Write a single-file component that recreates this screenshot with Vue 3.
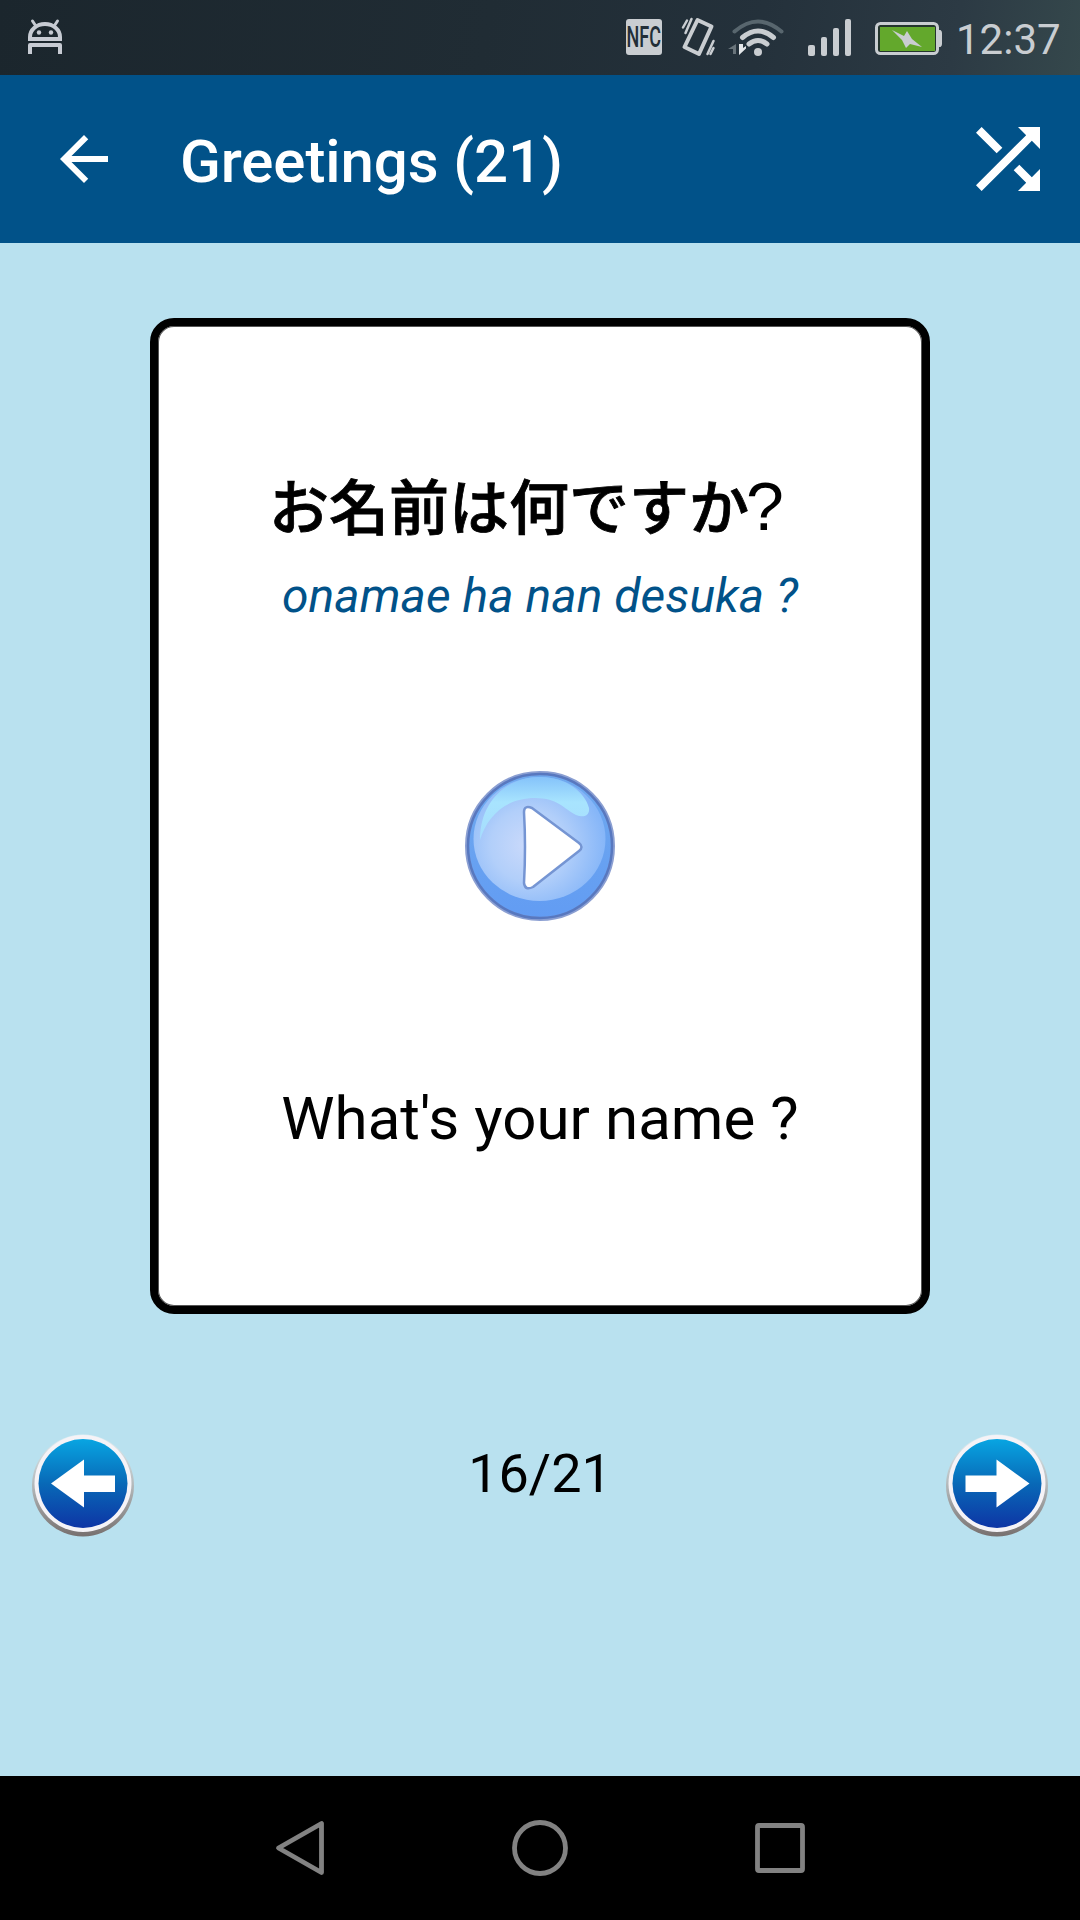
<template>
  <main class="phone">
    <div class="status-bar">
      <svg class="android" viewBox="28 18 34 36" fill="none" stroke="#c7cbd3" stroke-width="4">
        <path d="M30 39v-2a15 13 0 0 1 30 0v2z" />
        <path d="M32.500 21l3 4.500M57.500 21l-3 4.500" stroke-width="3" stroke-linecap="round" />
        <path d="M30 54v-9h30v9" stroke-linejoin="round" />
        <circle cx="39" cy="32.500" r="2.200" fill="#c7cbd3" stroke="none" />
        <circle cx="51" cy="32.500" r="2.200" fill="#c7cbd3" stroke="none" />
      </svg>
      <div class="status-icons">
        <div class="nfc"><span>NFC</span></div>
        <svg class="vibrate" viewBox="681 17 35 40" fill="none" stroke="#c9cdd1" stroke-linecap="round">
          <path d="M697.500 20l14 6.500-12.500 27.500-14.500-7z" stroke-width="4" stroke-linejoin="round" />
          <path d="M691.500 19l-6 14M687 20.500l-4 7M713.500 41l-6 13M713.500 48l-3 6" stroke-width="2.500" />
        </svg>
        <svg class="wifi" viewBox="728 18 56 39" fill="none" stroke="#c9cdd1" stroke-linecap="round">
          <path d="M734.500 31.500q23.500-20 47 0" stroke="#58666e" stroke-width="4" />
          <path d="M742.500 37.500q15.500-13 31 0M749 44q9-7 18 0" stroke-width="5" />
          <circle cx="758" cy="52" r="4" fill="#c9cdd1" stroke="none" />
          <path d="M739 44v11l7-6.500v-2.500l-3 2v-4z" fill="#e4e7ea" stroke="none" />
          <path d="M736 44v10h-3v-5h-5z" fill="#69747b" stroke="none" />
        </svg>
        <svg class="signal" viewBox="808 19 44 37" fill="#c9cdd1">
          <rect x="808" y="45" width="7" height="11" rx="2" />
          <rect x="821" y="37" width="6" height="19" rx="2" />
          <rect x="833" y="28" width="6" height="28" rx="2" />
          <rect x="845" y="19" width="6" height="37" rx="2" />
        </svg>
        <svg class="battery" viewBox="875 22 67 33">
          <rect x="876.500" y="23.500" width="61" height="30" rx="4" fill="#24352d" stroke="#c9cdd1" stroke-width="3" />
          <path d="M938 30h2.500q1.500 1 1.500 3v11q0 2-1.500 3h-2.500z" fill="#c9cdd1" />
          <rect x="880" y="27" width="55" height="24" fill="#63a82c" />
          <path d="M892 30l12 6 3-5 5 8 10 8-12-3-4 4-4-8z" fill="#c9cdd1" />
        </svg>
        <span class="clock">12:37</span>
      </div>
    </div>

    <header class="app-bar">
      <svg class="back" viewBox="0 0 24 24" fill="#fff">
        <path d="M20 11H7.830l5.590-5.590L12 4l-8 8 8 8 1.410-1.410L7.830 13H20v-2z" />
      </svg>
      <h1>{{ category }} ({{ total }})</h1>
      <svg class="shuffle" viewBox="0 0 24 24" fill="#fff">
        <path d="M10.590 9.170L5.410 4 4 5.410l5.170 5.170 1.420-1.410zM14.500 4l2.040 2.040L4 18.590 5.410 20 17.960 7.460 20 9.500V4h-5.500zm.330 9.410l-1.410 1.410 3.130 3.130L14.500 20H20v-5.500l-2.040 2.040-3.130-3.130z" />
      </svg>
    </header>

    <section class="content">
      <article class="card">
        <p class="japanese">{{ card.japanese }}<span class="mark">?</span></p>
        <p class="romaji">{{ card.romaji }}</p>
        <svg class="play" viewBox="0 0 150 150">
          <defs>
            <radialGradient id="disc" cx="0.42" cy="0.55" r="0.58">
              <stop offset="0" stop-color="#cbdafb" />
              <stop offset="0.500" stop-color="#b2cffa" />
              <stop offset="1" stop-color="#86b6f8" />
            </radialGradient>
            <linearGradient id="base" x1="0" y1="0" x2="0" y2="1">
              <stop offset="0" stop-color="#6fa9ee" />
              <stop offset="1" stop-color="#629cf3" />
            </linearGradient>
            <linearGradient id="gloss" x1="0" y1="0" x2="0" y2="1">
              <stop offset="0" stop-color="#85c3fa" />
              <stop offset="0.400" stop-color="#a8e4fe" />
              <stop offset="1" stop-color="#a6dcfd" />
            </linearGradient>
          </defs>
          <circle cx="75" cy="75" r="73" fill="url(#base)" stroke="#8b9fd2" stroke-width="4" />
          <circle cx="75" cy="75" r="72" fill="none" stroke="#5878bf" stroke-width="2.500" />
          <ellipse cx="74.500" cy="68" rx="66" ry="62" fill="url(#disc)" />
          <path d="M15 69C15 30 42 6 75 6c26 0 45 15 49 31 1 8-6 10-13 7C99 38 93 27 70 27 40 27 22 46 15 69z" fill="url(#gloss)" />
          <path d="M59 41q0-7 8-4l47 35q5 4 0 8l-46 36q-8 4-9-4 2-36 0-71z" fill="#fff" stroke="#7595d3" stroke-width="2.500" stroke-linejoin="round" />
        </svg>
        <p class="english">{{ card.english }}</p>
      </article>

      <div class="pager">
        <svg v-for="dir in ['prev', 'next']" :key="dir" :class="['round', dir]" viewBox="0 0 106 108">
          <defs>
            <linearGradient :id="dir + '-fill'" x1="0" y1="0" x2="0" y2="1">
              <stop offset="0" stop-color="#08a5e2" />
              <stop offset="0.500" stop-color="#0869b7" />
              <stop offset="1" stop-color="#0e35a5" />
            </linearGradient>
            <linearGradient :id="dir + '-rim'" x1="0" y1="0" x2="0" y2="1">
              <stop offset="0" stop-color="#e0f0f5" />
              <stop offset="0.500" stop-color="#b3b8ba" />
              <stop offset="1" stop-color="#77706f" />
            </linearGradient>
          </defs>
          <circle cx="53" cy="54.500" r="51" :fill="`url(#${dir}-rim)`" />
          <circle cx="53" cy="52.500" r="48.500" fill="#f5f3f7" />
          <circle cx="53" cy="52.500" r="44.500" :fill="`url(#${dir}-fill)`" />
          <path v-if="dir === 'prev'" d="M21 52.500L54 28.500V44.500H85V61H54V76.500z" fill="#fff" />
          <path v-else d="M85.500 52.500L52.500 28.500V44.500H21.500V61H52.500V76.500z" fill="#fff" />
        </svg>
        <span class="counter">{{ current }}/{{ total }}</span>
      </div>
    </section>

    <nav class="nav-bar">
      <svg viewBox="0 0 60 60"><path d="M51.500 5.500v49L8.500 30z" /></svg>
      <svg viewBox="0 0 60 60"><circle cx="30" cy="30" r="25.500" /></svg>
      <svg viewBox="0 0 60 60"><rect x="7.500" y="7.500" width="45" height="45" rx="1.500" /></svg>
    </nav>
  </main>
</template>

<script setup>
import { ref } from 'vue'

const category = 'Greetings'
const total = 21
const current = ref(16)

const card = ref({
  japanese: 'お名前は何ですか',
  romaji: 'onamae ha nan desuka ?',
  english: "What's your name ?",
})
</script>

<style>
body {
  margin: 0;
}
</style>

<style scoped>
.phone {
  display: flex;
  flex-direction: column;
  width: 1080px;
  height: 1920px;
  overflow: hidden;
  background: #b9e1ef;
  font-family: Roboto, "Noto Sans CJK JP", sans-serif;
}

svg {
  display: block;
  flex: none;
}

p,
h1 {
  margin: 0;
  white-space: nowrap;
}

.status-bar {
  display: flex;
  justify-content: space-between;
  box-sizing: border-box;
  height: 75px;
  padding: 0 19px 0 28px;
  background: linear-gradient(100deg, #1b262d 0%, #202c34 45%, #24313b 70%, #2c3a44 88%, #35484c 100%);
}

.android {
  width: 34px;
  height: 36px;
  margin-top: 18px;
}

.status-icons {
  display: flex;
  align-items: flex-start;
}

.nfc {
  display: flex;
  justify-content: center;
  width: 36px;
  height: 36px;
  margin: 19px 19px 0 0;
  border-radius: 3px;
  background: #c9cdd1;
}

.nfc span {
  font-size: 30px;
  font-weight: 500;
  line-height: 36px;
  color: #222e37;
  transform: scaleX(0.6);
}

.vibrate {
  width: 35px;
  height: 40px;
  margin: 17px 12px 0 0;
}

.wifi {
  width: 56px;
  height: 39px;
  margin: 18px 24px 0 0;
}

.signal {
  width: 44px;
  height: 37px;
  margin: 19px 23px 0 0;
}

.battery {
  width: 67px;
  height: 33px;
  margin: 22px 14px 0 0;
}

.clock {
  width: 105px;
  padding-top: 4px;
  font-size: 42px;
  line-height: 72px;
  color: #c9cdd1;
}

.app-bar {
  display: flex;
  align-items: center;
  box-sizing: border-box;
  height: 168px;
  padding: 0 24px 0 48px;
  background: #015289;
}

.back {
  width: 72px;
  height: 72px;
}

.app-bar h1 {
  flex: 1;
  padding: 5px 0 0 60px;
  font-size: 60px;
  font-weight: 500;
  line-height: 70px;
  letter-spacing: -0.1px;
  color: #fff;
}

.shuffle {
  width: 96px;
  height: 96px;
}

.content {
  display: flex;
  flex: 1;
  flex-direction: column;
  align-items: center;
  padding-top: 75px;
}

.card {
  display: flex;
  flex-direction: column;
  align-items: center;
  box-sizing: border-box;
  width: 780px;
  height: 996px;
  padding-top: 133px;
  border: 8px solid #000;
  border-radius: 24px;
  background: #fff;
  box-shadow: inset 0 0 0 1px #555;
  color: #000;
}

.japanese {
  width: 542px;
  height: 90px;
  font-family: "Noto Sans CJK JP", sans-serif;
  font-size: 60px;
  font-weight: 500;
  line-height: 90px;
  -webkit-text-stroke: 0.8px #000;
}

.mark {
  margin-left: -3px;
  font-family: "Liberation Sans", sans-serif;
  font-size: 68px;
  font-weight: 400;
  line-height: 1;
  -webkit-text-stroke: 0;
}

.romaji {
  margin-top: 17px;
  font-size: 48px;
  font-style: italic;
  line-height: 60px;
  letter-spacing: 0.06px;
  color: #015289;
}

.play {
  width: 150px;
  height: 150px;
  margin-top: 145px;
}

.english {
  margin-top: 163px;
  font-size: 60px;
  line-height: 70px;
  letter-spacing: 0.06px;
}

.pager {
  display: flex;
  justify-content: space-between;
  box-sizing: border-box;
  width: 100%;
  padding: 117px 30px 0 30px;
}

.round {
  width: 106px;
  height: 108px;
}

.counter {
  order: 1;
  padding-top: 1px;
  font-size: 54px;
  line-height: 84px;
}

.next {
  order: 2;
}

.nav-bar {
  display: flex;
  justify-content: space-between;
  align-items: center;
  box-sizing: border-box;
  height: 144px;
  padding: 0 270px;
  background: #000;
}

.nav-bar svg {
  width: 60px;
  height: 60px;
  fill: none;
  stroke: #828282;
  stroke-width: 4.8;
  stroke-linejoin: round;
}
</style>
